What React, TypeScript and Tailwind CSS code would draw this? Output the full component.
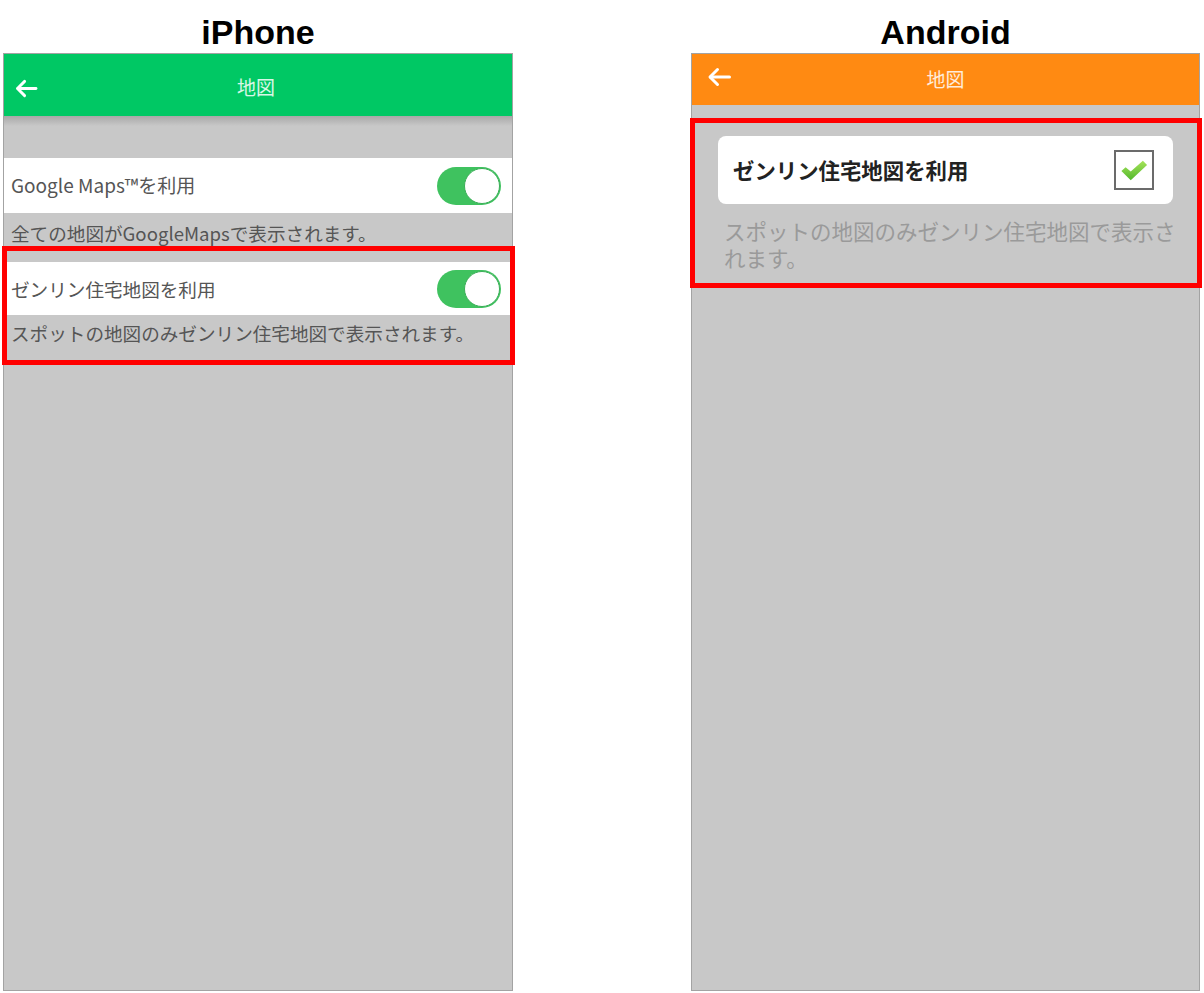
import React from "react";

const jp = { fontFamily: '"Noto Sans CJK JP", "Noto Sans", sans-serif' };

function Arrow({ className }: { className?: string }) {
  return (
    <svg viewBox="0 0 24 20" className={className} fill="none" stroke="white" strokeWidth="3" strokeLinecap="round" strokeLinejoin="round">
      <path d="M22 10H3" />
      <path d="M10 2.5L2.5 10L10 17.5" />
    </svg>
  );
}

function Toggle() {
  return (
    <div className="w-[64px] h-[38px] rounded-full bg-[#3fc25f] flex items-center justify-end pr-[1px]">
      <div className="w-[36px] h-[36px] rounded-full bg-white border border-[#3aae57]" />
    </div>
  );
}

function Check() {
  return (
    <div className="w-[40px] h-[40px] border-2 border-[#6b6b6b] bg-white flex items-center justify-center">
      <svg viewBox="0 0 30 24" className="w-[28px] h-[23px]">
        <defs>
          <linearGradient id="cg" x1="0" y1="0" x2="0" y2="1">
            <stop offset="0" stopColor="#a6e35a" />
            <stop offset="1" stopColor="#52b82c" />
          </linearGradient>
        </defs>
        <path d="M1.5 12.5 L6 8.5 L11.5 13 L24.5 1.5 L29 6 L11.5 22.5 Z" fill="url(#cg)" />
      </svg>
    </div>
  );
}

export default function App() {
  return (
    <div className="w-[1204px] h-[993px] bg-white flex pl-[3px] gap-[178px]" style={jp}>
      {/* iPhone */}
      <div className="w-[510px] flex flex-col">
        <div
          className="h-[53px] pt-[14px] text-center text-[34px] leading-[36px] font-bold text-black"
          style={{ fontFamily: '"Liberation Sans", Arial, sans-serif' }}
        >
          iPhone
        </div>
        <div className="h-[938px] border border-[#a3a3a3] bg-[#c8c8c8] flex flex-col">
          <div className="h-[62px] bg-[#00c864] flex items-center relative">
            <Arrow className="absolute left-[11px] top-[25px] w-[23px] h-[19px]" />
            <div className="flex-1 text-center text-[19px] text-white/85 pt-[4px] pr-[4px]">地図</div>
          </div>
          <div className="h-[42px]">
            <div className="h-[10px] bg-gradient-to-b from-[#a8a8a8] to-[#c8c8c8]" />
          </div>
          <div className="h-[55px] bg-white flex items-center justify-between pl-[7px] pr-[11px]">
            <span className="text-[19px] text-[#555]">Google Maps™を利用</span>
            <Toggle />
          </div>
          <div className="h-[49px] pt-[8px] pl-[7px] text-[18.6px] leading-[24px] text-[#555]">
            全ての地図がGoogleMapsで表示されます。
          </div>
          <div className="relative">
            <div className="absolute -left-[2px] -right-[3px] -top-[16px] h-[119px] border-[5px] border-[#ff0000]" />
            <div className="h-[53px] bg-white flex items-center justify-between pl-[7px] pr-[11px]">
              <span className="text-[18.6px] text-[#555]">ゼンリン住宅地図を利用</span>
              <Toggle />
            </div>
            <div className="pt-[6px] pl-[7px] text-[18.6px] leading-[24px] text-[#555]">
              スポットの地図のみゼンリン住宅地図で表示されます。
            </div>
          </div>
        </div>
      </div>

      {/* Android */}
      <div className="w-[509px] flex flex-col">
        <div
          className="h-[53px] pt-[14px] text-center text-[34px] leading-[36px] font-bold text-black"
          style={{ fontFamily: '"Liberation Sans", Arial, sans-serif' }}
        >
          Android
        </div>
        <div className="h-[938px] border border-[#a3a3a3] bg-[#c8c8c8] flex flex-col">
          <div className="h-[51px] bg-[#ff8a12] flex items-center relative">
            <Arrow className="absolute left-[15px] top-[13px] w-[25px] h-[20px]" />
            <div className="flex-1 text-center text-[19px] text-white/85">地図</div>
          </div>
          <div className="relative pt-[31px] px-[26px]">
            <div className="absolute -left-[2px] -right-[3px] top-[13px] h-[170px] border-[5px] border-[#ff0000]" />
            <div className="h-[68px] bg-white rounded-[8px] flex items-center justify-between pl-[15px] pr-[19px]">
              <span className="text-[21.4px] font-bold text-[#222]">ゼンリン住宅地図を利用</span>
              <Check />
            </div>
            <div className="pt-[13px] pl-[6px] w-[470px] text-[21.5px] leading-[27px] text-[#9a9a9a]">
              スポットの地図のみゼンリン住宅地図で表示されます。
            </div>
          </div>
        </div>
      </div>
    </div>
  );
}
